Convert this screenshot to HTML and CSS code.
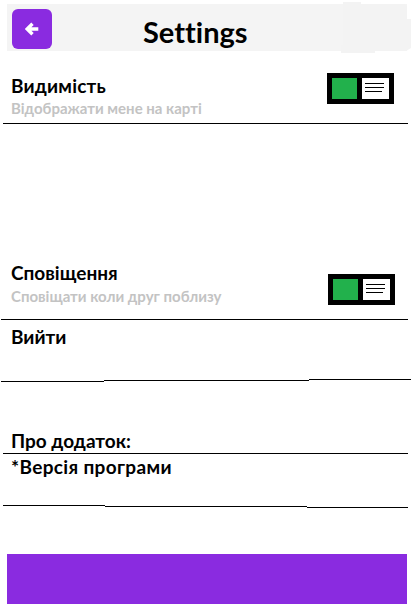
FILE: index.html
```
<!DOCTYPE html>
<html lang="uk">
<head>
<meta charset="utf-8">
<title>Settings</title>
<link rel="stylesheet" href="styles.css">
</head>
<body>
<header class="topbar">
  <svg class="topbar-shade" width="70" height="52" viewBox="0 0 70 52"><path d="M2 0H20V2H64L66 4V17H70V46L65 49H34V51H0V43H2Z" fill="#f3f3f3"/></svg>
  <button class="back" aria-label="Back">
    <svg width="14" height="14" viewBox="0 0 14 14"><path d="M7.5 1.7 2.2 7l5.3 5.3M2.8 7H13.3" fill="none" stroke="#fff" stroke-width="3.4"/></svg>
  </button>
  <h1 class="title">Settings</h1>
</header>
<main>
  <section class="row visibility">
    <div>
      <h2 class="label l-visibility">Видимість</h2>
      <p class="hint">Відображати мене на карті</p>
    </div>
    <div class="toggle"><span class="on"></span><span class="off"><i></i><i></i><i class="short"></i></span></div>
  </section>
  <section class="row notifications">
    <div>
      <h2 class="label">Сповіщення</h2>
      <p class="hint">Сповіщати коли друг поблизу</p>
    </div>
    <div class="toggle"><span class="on"></span><span class="off"><i></i><i></i><i class="short"></i></span></div>
  </section>
  <section class="exit"><h2 class="label">Вийти</h2></section>
  <svg class="divider" width="411" height="3" shape-rendering="crispEdges"><path d="M1 2.5H104M104 1.5H309M309 .5H411" stroke="#000"/></svg>
  <section class="about"><h2 class="label">Про додаток:</h2></section>
  <section class="version"><h2 class="label l-version">*Версія програми</h2></section>
  <svg class="divider" width="411" height="3" shape-rendering="crispEdges"><path d="M3 .5H105M105 1.5H307M307 2.5H408" stroke="#000"/></svg>
</main>
<footer class="bottombar"></footer>
</body>
</html>
```
FILE: styles.css
```
* { box-sizing: border-box; margin: 0; padding: 0; }
body {
  width: 411px;
  height: 615px;
  overflow: hidden;
  background: #fff;
  color: #000;
  font-family: Lato, "Open Sans", sans-serif;
  font-weight: 700;
  font-variant-ligatures: none;
}
.topbar {
  position: relative;
  display: flex;
  margin: 4px 4px 0 7px;
  height: 47px;
  background: #f4f4f4;
}
.topbar-shade { position: absolute; right: -4px; top: -2px; }
.back {
  display: flex;
  align-items: center;
  justify-content: center;
  width: 40px;
  height: 40px;
  margin: 5px 0 0 5px;
  border: 0;
  border-radius: 6px;
  background: #8a2be0;
}
.title { position: relative; margin: 11px 0 0 91px; font-size: 29px; line-height: 34px; }
.row { display: flex; justify-content: space-between; border-bottom: 1px solid #000; }
.visibility { margin: 22px 3px 0 3px; height: 51px; padding: 0 14px 0 8px; }
.notifications { margin: 137px 3px 0 1px; height: 59px; padding: 0 13px 0 10px; }
.label { font-size: 19px; line-height: 24px; white-space: nowrap; }
.l-visibility { padding-top: 1px; letter-spacing: 0.2px; }
.l-version { letter-spacing: 0.35px; }
.hint { font-size: 15px; line-height: 20px; color: #c3c3c3; white-space: nowrap; }
.notifications .hint { padding-top: 1px; }
.toggle {
  display: flex;
  gap: 5px;
  width: 67px;
  height: 31px;
  padding: 5px;
  background: #000;
}
.notifications .toggle { margin-top: 13px; }
.on { width: 25px; background: #22b14c; }
.off { display: flex; flex-direction: column; gap: 3px; width: 27px; padding: 5px 0 0 3px; background: #fff; }
.off i { width: 19px; height: 1px; background: #000; }
.off .short { width: 17px; }
.exit { height: 59px; padding: 5px 11px 0; }
.divider { display: block; }
.about { height: 72px; margin: 0 3px; padding: 47px 8px 0; border-bottom: 1px solid #000; }
.version { height: 51px; padding: 1px 11px 0; }
.bottombar { width: 400px; height: 50px; margin: 46px 0 0 7px; background: #8a2be0; }
```
